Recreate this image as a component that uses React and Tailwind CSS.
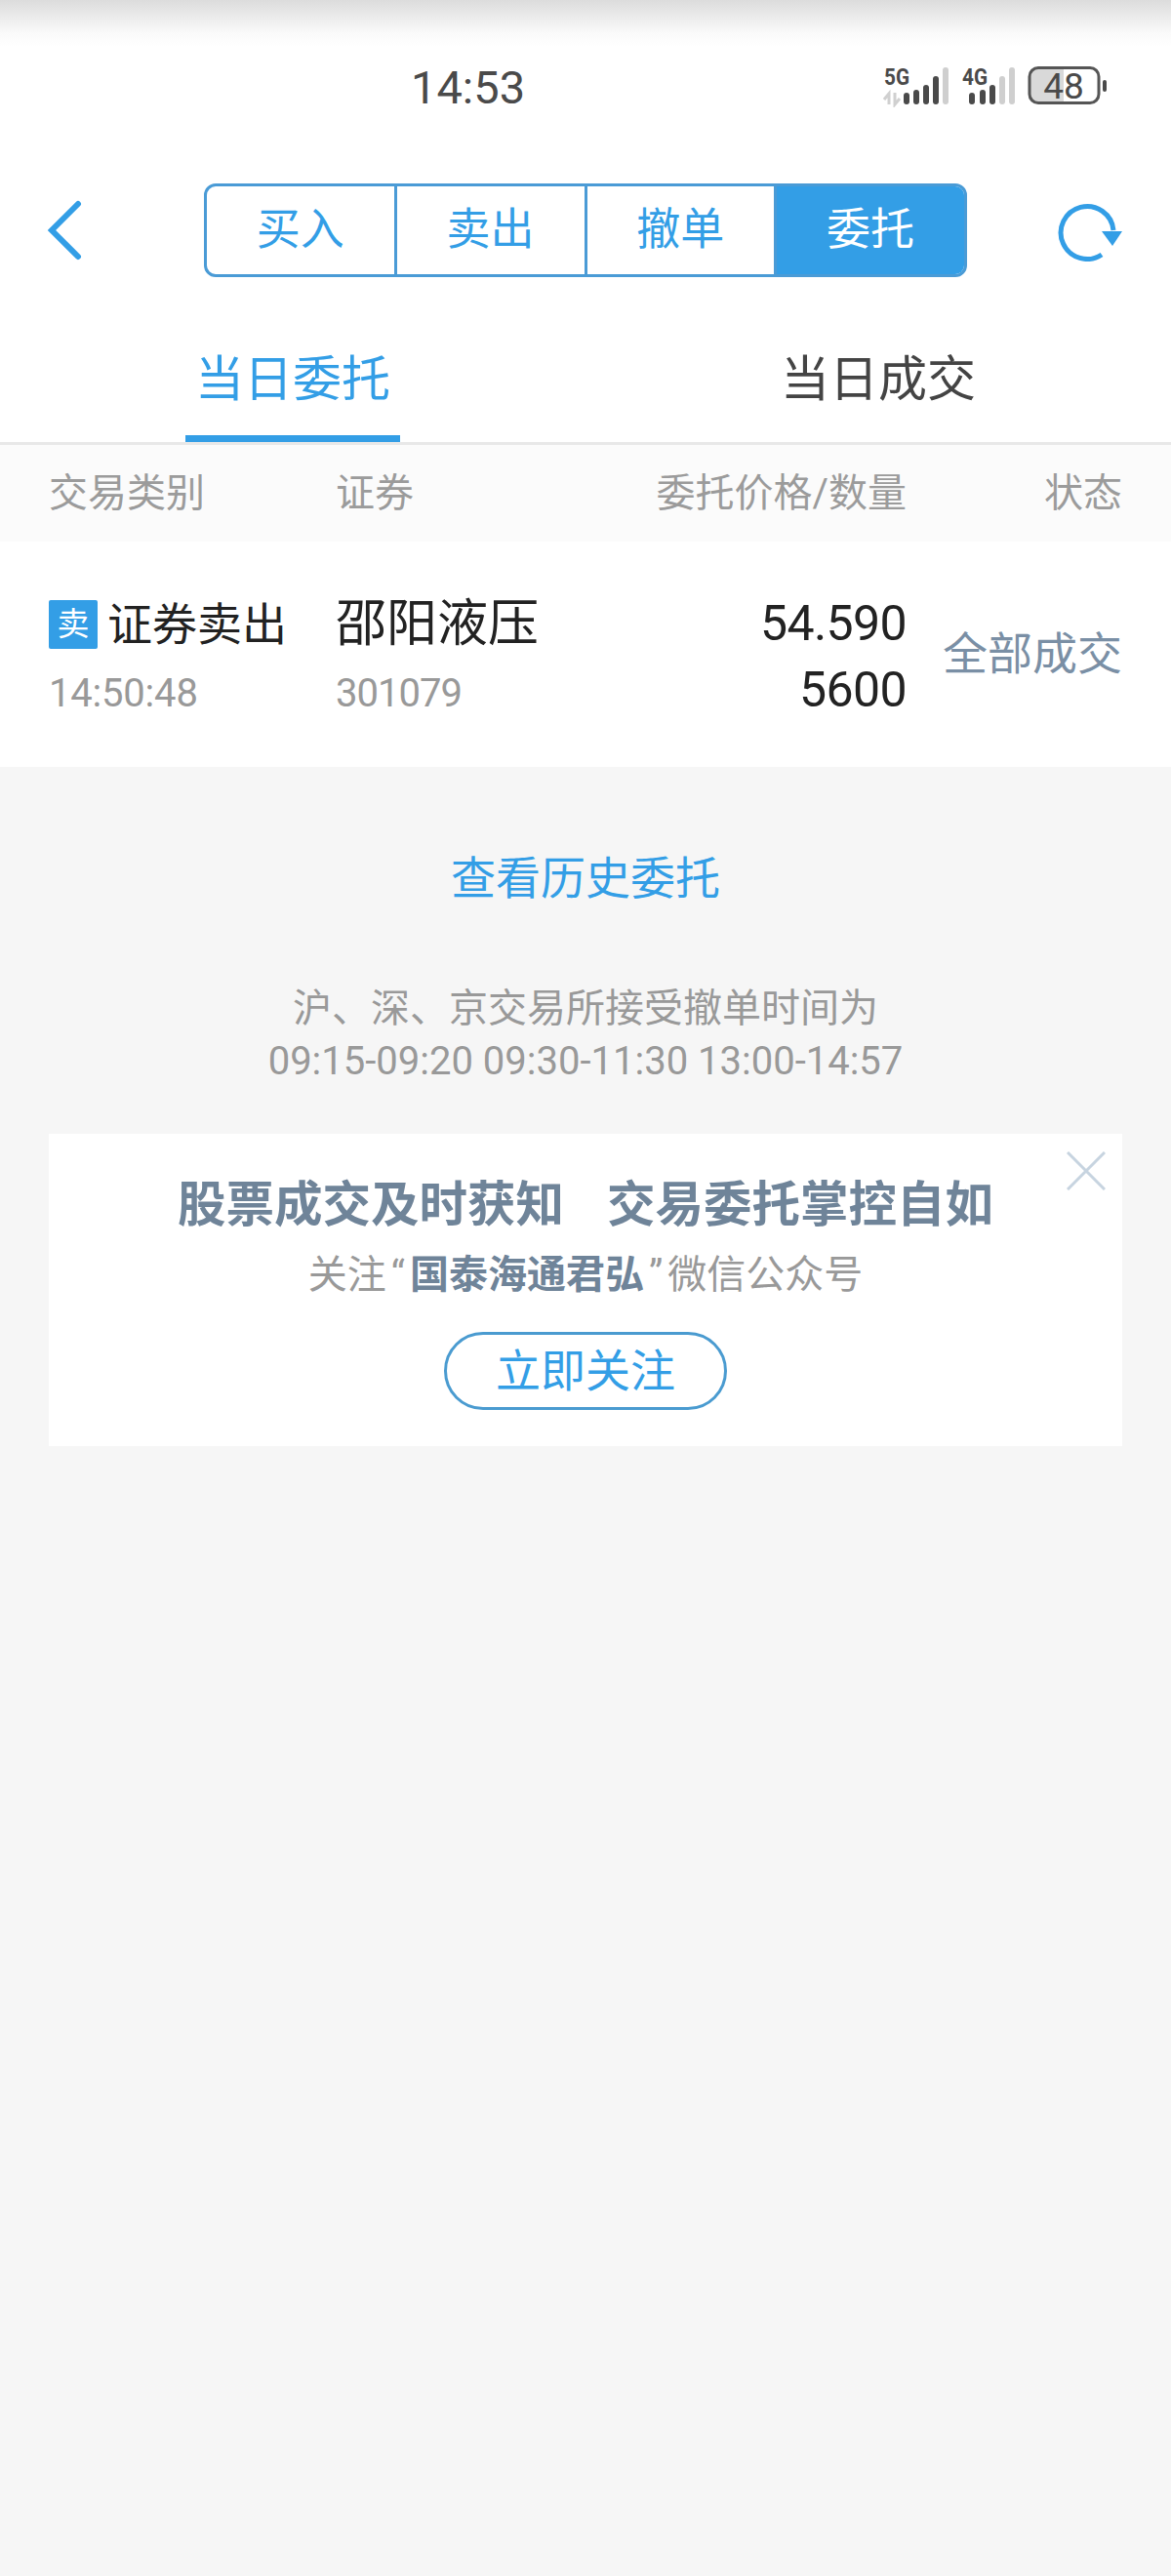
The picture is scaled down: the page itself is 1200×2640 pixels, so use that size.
const CJK = { fontFamily: 'Roboto, "Noto Sans CJK SC", sans-serif' }

const BLUE = "#339ee6"

const SignalIcons = () => (
  <svg width="232" height="44" viewBox="905 66 232 44" className="block">
    {/* 5G */}
    <text x="906" y="87" fontSize="23" fontWeight="700" fill="#4a4a4a" fontFamily="Roboto" textLength="26" lengthAdjust="spacingAndGlyphs">5G</text>
    <path d="M911 107v-11l-5 6M917 95v12l5-6" fill="none" stroke="#d0d0d0" strokeWidth="3" />
    <rect x="926" y="95" width="6" height="12" rx="3" fill="#4a4a4a" />
    <rect x="936" y="92" width="6" height="15" rx="3" fill="#4a4a4a" />
    <rect x="946" y="87" width="6" height="20" rx="3" fill="#4a4a4a" />
    <rect x="956" y="78" width="6" height="29" rx="3" fill="#4a4a4a" />
    <rect x="966" y="69" width="6" height="38" rx="3" fill="#cfcfcf" />
    {/* 4G */}
    <text x="986" y="87" fontSize="23" fontWeight="700" fill="#4a4a4a" fontFamily="Roboto" textLength="26" lengthAdjust="spacingAndGlyphs">4G</text>
    <rect x="993" y="95" width="6" height="12" rx="3" fill="#4a4a4a" />
    <rect x="1004" y="92" width="6" height="15" rx="3" fill="#4a4a4a" />
    <rect x="1014" y="87" width="6" height="20" rx="3" fill="#4a4a4a" />
    <rect x="1024" y="78" width="6" height="29" rx="3" fill="#cfcfcf" />
    <rect x="1034" y="69" width="6" height="38" rx="3" fill="#cfcfcf" />
    {/* battery */}
    <path d="M1063 69.500h27v36h-27a8 8 0 0 1-8-8v-20a8 8 0 0 1 8-8z" fill="#d9d9d9" />
    <rect x="1055" y="69.500" width="71" height="36" rx="9" fill="none" stroke="#555555" strokeWidth="3" />
    <rect x="1130" y="82" width="4" height="12" rx="2" fill="#4a4a4a" />
    <text x="1090" y="101" fontSize="37" fill="#4a4a4a" textAnchor="middle" fontFamily="Roboto">48</text>
  </svg>
)

const BackIcon = () => (
  <svg width="36" height="62" viewBox="0 0 36 62" className="block">
    <path d="M32 4 L5 31 L32 58" fill="none" stroke={BLUE} strokeWidth="6" strokeLinecap="round" strokeLinejoin="miter" />
  </svg>
)

const RefreshIcon = () => (
  <svg width="68" height="62" viewBox="1084 206 68 62" className="block">
    <path d="M1129 261 A27 27 0 1 1 1141 236" fill="none" stroke={BLUE} strokeWidth="5" />
    <path d="M1129 237 H1150 L1140 252 Z" fill={BLUE} />
  </svg>
)

const segments = ["买入", "卖出", "撤单", "委托"]

export default function App() {
  return (
    <div className="flex min-h-[2640px] w-[1200px] flex-col bg-[#f6f6f6]" style={CJK}>
      {/* 状态栏 */}
      <div className="flex h-[170px] justify-between bg-gradient-to-b from-[#dcdcdc] via-[#fafafa] via-[20%] to-white to-[28%] pl-[421px] pr-[63px] pt-[66px]">
        <span className="text-[47px] leading-[48px] text-[#4a4a4a]">14:53</span>
        <SignalIcons />
      </div>

      {/* 导航 */}
      <div className="flex h-[152px] items-start bg-white pl-[48px] pt-[18px]">
        <div className="mt-[17px]"><BackIcon /></div>
        <div className="ml-[125px] flex h-[96px] w-[782px] overflow-hidden rounded-[12px] border-[3px] border-[#4a9bd6]">
          {segments.map((s, i) => (
            <div
              key={s}
              className={
                i === 3
                  ? "flex flex-1 items-center justify-center bg-[#339ee6] text-[45px] text-white"
                  : "flex flex-1 items-center justify-center border-r-[3px] border-[#4a9bd6] text-[45px] text-[#339ee6]"
              }
            >
              {s}
            </div>
          ))}
        </div>
        <div className="ml-[93px] mt-[18px]"><RefreshIcon /></div>
      </div>

      {/* 标签 */}
      <div className="grid h-[134px] grid-cols-2 border-b-[3px] border-[#e8e8e8] bg-white">
        <div className="flex flex-col items-center justify-end">
          <span className="mb-[23px] text-[50px] leading-[68px] text-[#339ee6]">当日委托</span>
          <div className="h-[7px] w-[220px] bg-[#339ee6]" />
        </div>
        <div className="flex flex-col items-center justify-end">
          <span className="mb-[30px] text-[50px] leading-[68px] text-[#444444]">当日成交</span>
        </div>
      </div>

      {/* 表头 */}
      <div className="grid h-[99px] grid-cols-[294px_1fr_221px] items-center bg-[#fbfbfb] px-[50px] text-[40px] text-[#9b9b9b]">
        <span>交易类别</span>
        <div className="flex justify-between">
          <span>证券</span>
          <span>委托价格/数量</span>
        </div>
        <span className="text-right">状态</span>
      </div>

      {/* 委托记录 */}
      <div className="grid h-[231px] grid-cols-[294px_1fr_221px] items-start bg-white px-[50px]">
        <div className="pt-[55px]">
          <div className="flex items-center gap-[10px]">
            <span className="flex h-[50px] w-[50px] items-center justify-center rounded-[2px] bg-[#339ee6] text-[33px] text-white">卖</span>
            <span className="text-[46px] leading-[60px] text-[#222222]">证券卖出</span>
          </div>
          <div className="mt-[18px] text-[40px] leading-[46px] tracking-[-0.2px] text-[#999999]">14:50:48</div>
        </div>
        <div className="flex justify-between">
          <div className="pt-[55px]">
            <div className="text-[52px] leading-[60px] text-[#222222]">邵阳液压</div>
            <div className="mt-[18px] text-[40px] leading-[46px] tracking-[-1px] text-[#999999]">301079</div>
          </div>
          <div className="pt-[50px] text-right text-[50px] font-[450] leading-[68px] tracking-[-0.6px] text-[#222222]">
            <div>54.590</div>
            <div>5600</div>
          </div>
        </div>
        <div className="pt-[85px] text-right text-[46px] leading-[60px] text-[#7a8fa5]">全部成交</div>
      </div>

      <div className="mt-[81px] text-center text-[46px] leading-[66px] text-[#339ee6]">查看历史委托</div>

      <div className="mt-[74px] text-center text-[40px] leading-[54px] text-[#999999]">
        <div>沪、深、京交易所接受撤单时间为</div>
        <div>09:15-09:20 09:30-11:30 13:00-14:57</div>
      </div>

      {/* 关注卡片 */}
      <div className="relative mx-[50px] mt-[47px] flex h-[320px] flex-col items-center bg-white pt-[38px]">
        <svg width="40" height="40" viewBox="0 0 40 40" className="absolute right-[17px] top-[18px]">
          <path d="M1 1 L39 39 M39 1 L1 39" fill="none" stroke="#c7d4e0" strokeWidth="3" />
        </svg>
        <div className="text-[49.500px] font-semibold leading-[70px] text-[#6f8499]">
          股票成交及时获知<span className="ml-[44px]">交易委托掌控自如</span>
        </div>
        <div className="mt-[1px] text-[40px] leading-[72px] text-[#999999]">
          关注<span className="mx-[5px]">“</span><span className="font-semibold text-[#6f8499]">国泰海通君弘</span><span className="mx-[5px]">”</span>微信公众号
        </div>
        <div className="mt-[22px] flex h-[80px] w-[290px] items-center justify-center rounded-full border-[3px] border-[#4a9bd0] text-[46px] text-[#339ee6]">
          立即关注
        </div>
      </div>
    </div>
  )
}
